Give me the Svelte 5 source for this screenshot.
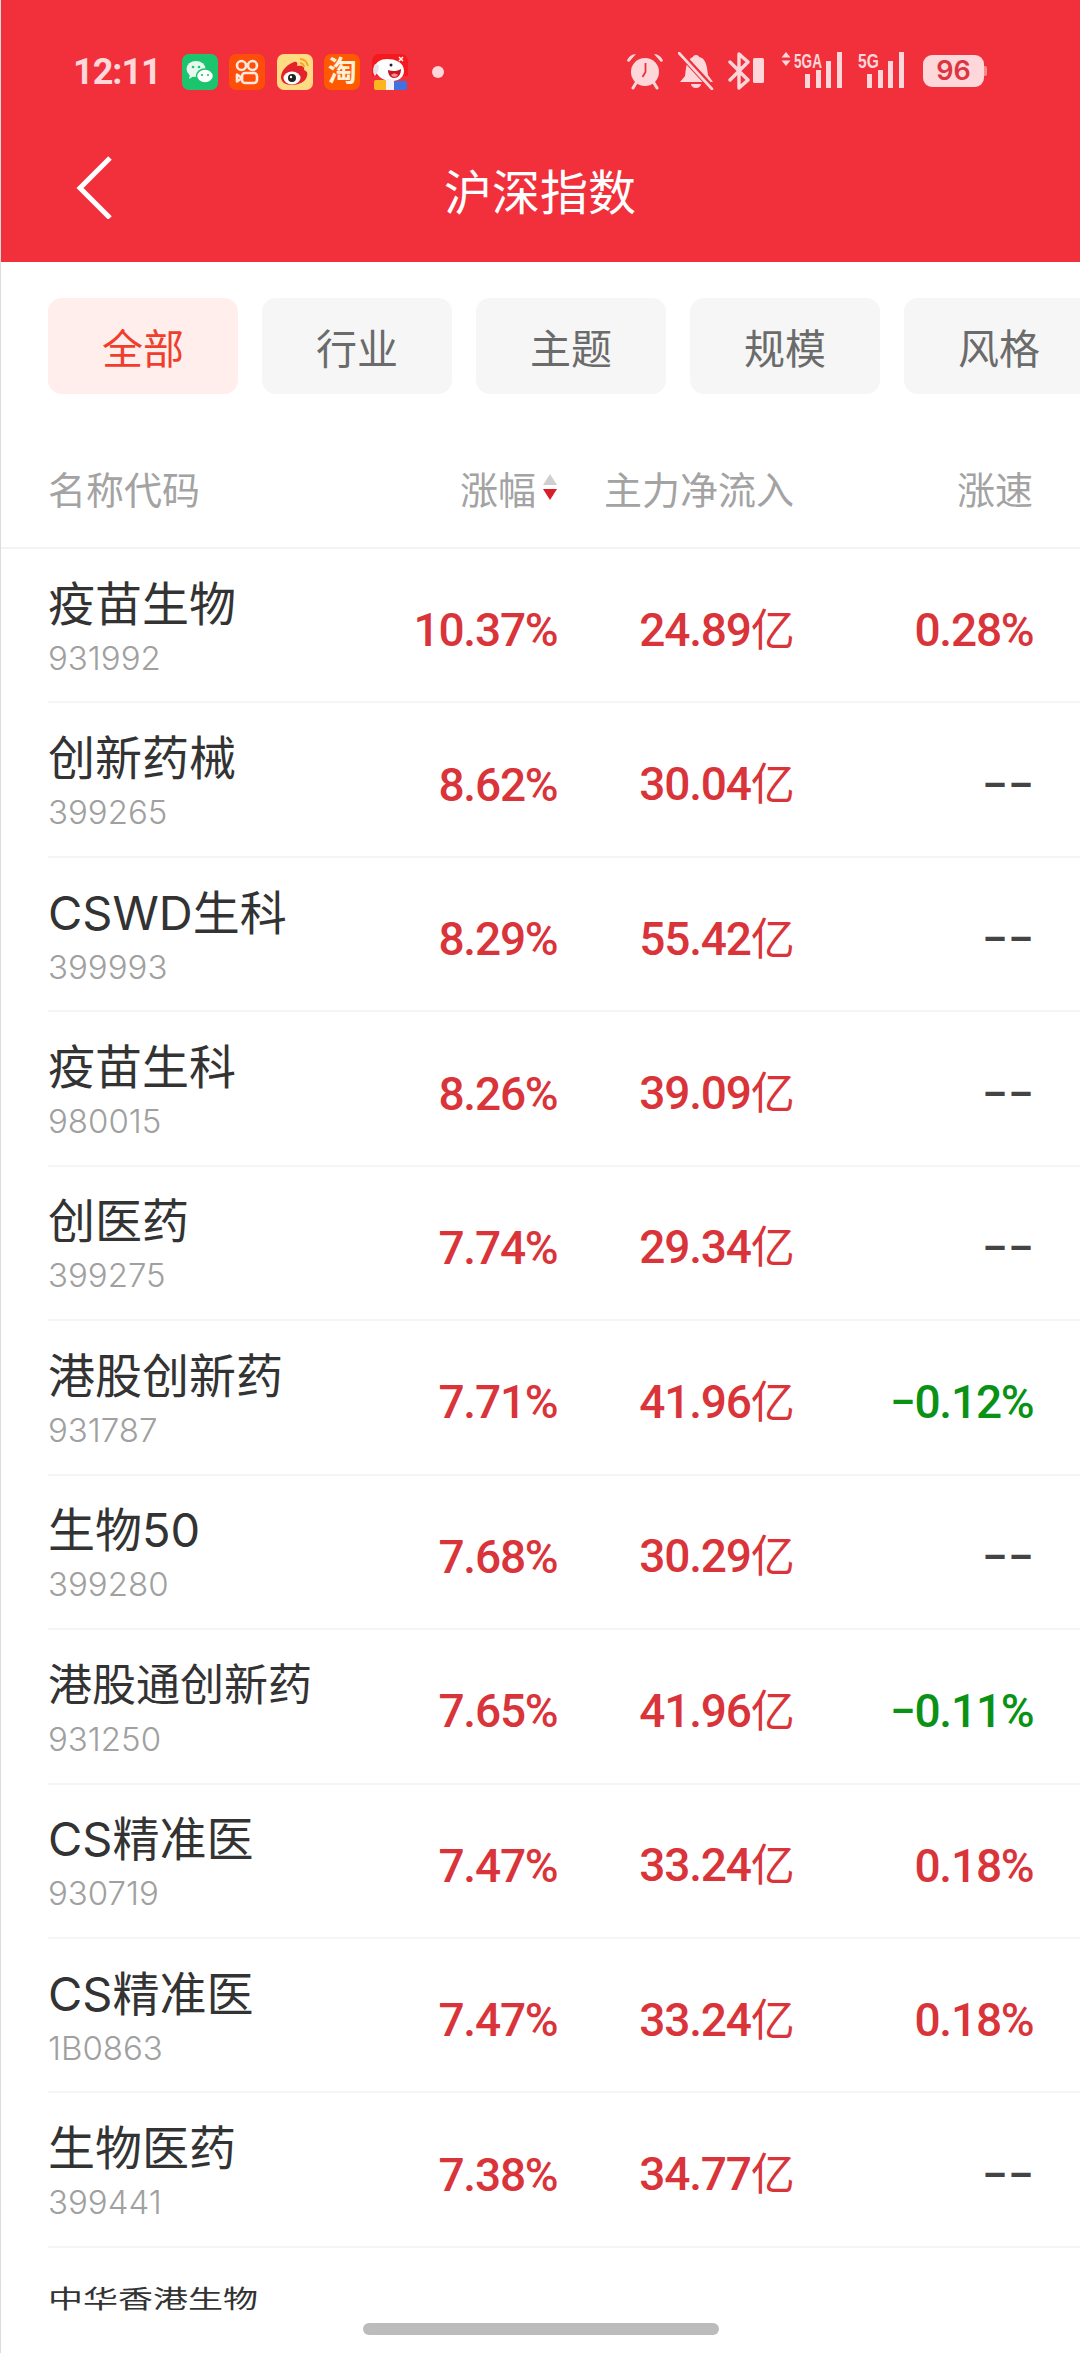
<script>
	const tabs = ['全部', '行业', '主题', '规模', '风格'];

	const rows = [
		{ name: '疫苗生物', code: '931992', change: '10.37%', flow: '24.89', speed: '0.28%', dir: 'up' },
		{ name: '创新药械', code: '399265', change: '8.62%', flow: '30.04', speed: '−−', dir: 'none' },
		{ name: 'CSWD生科', code: '399993', change: '8.29%', flow: '55.42', speed: '−−', dir: 'none' },
		{ name: '疫苗生科', code: '980015', change: '8.26%', flow: '39.09', speed: '−−', dir: 'none' },
		{ name: '创医药', code: '399275', change: '7.74%', flow: '29.34', speed: '−−', dir: 'none' },
		{ name: '港股创新药', code: '931787', change: '7.71%', flow: '41.96', speed: '−0.12%', dir: 'down' },
		{ name: '生物50', code: '399280', change: '7.68%', flow: '30.29', speed: '−−', dir: 'none' },
		{ name: '港股通创新药', code: '931250', change: '7.65%', flow: '41.96', speed: '−0.11%', dir: 'down', small: true },
		{ name: 'CS精准医', code: '930719', change: '7.47%', flow: '33.24', speed: '0.18%', dir: 'up' },
		{ name: 'CS精准医', code: '1B0863', change: '7.47%', flow: '33.24', speed: '0.18%', dir: 'up' },
		{ name: '生物医药', code: '399441', change: '7.38%', flow: '34.77', speed: '−−', dir: 'none' }
	];
</script>

<div class="page">
	<header class="top">
		<div class="status">
			<span class="time">12:11</span>
			<div class="apps">
				<svg class="app" viewBox="0 0 36 36" aria-hidden="true">
					<rect width="36" height="36" rx="7" fill="#1cc46d" />
					<ellipse cx="14" cy="15" rx="9.5" ry="8" fill="#e8f8ee" />
					<path d="M8 20l-1 5 5-3z" fill="#e8f8ee" />
					<ellipse cx="23" cy="22" rx="8.5" ry="7" fill="#fff" stroke="#1cc46d" stroke-width="1.5" />
					<circle cx="11" cy="13" r="1.3" fill="#1cc46d" />
					<circle cx="17" cy="13" r="1.3" fill="#1cc46d" />
					<circle cx="20" cy="21" r="1.1" fill="#1cc46d" />
					<circle cx="26" cy="21" r="1.1" fill="#1cc46d" />
				</svg>
				<svg class="app" viewBox="0 0 36 36" aria-hidden="true">
					<rect width="36" height="36" rx="7" fill="#ff4d0a" />
					<g fill="none" stroke="#ffe9dc" stroke-width="2.6">
						<circle cx="12.5" cy="11.5" r="4.5" />
						<circle cx="23.5" cy="11.5" r="4.5" />
						<rect x="13" y="19" width="15" height="10" rx="3" />
						<path d="M13 24l-5-3.5v7z" stroke-linejoin="round" />
					</g>
				</svg>
				<svg class="app" viewBox="0 0 36 36" aria-hidden="true">
					<rect width="36" height="36" rx="7" fill="#ffdc84" />
					<path d="M4 23c0-7 7-13 13-15 3-1 4 1 3 4 5-1 8 1 7 4 3 1 4 3 3 6-1 6-9 9-15 9-7 0-11-3-11-8z" fill="#e3222b" />
					<ellipse cx="15" cy="24" rx="8.5" ry="6.5" fill="#fff" />
					<circle cx="15" cy="24" r="4" fill="#222" />
					<circle cx="14" cy="23" r="1.2" fill="#fff" />
					<path d="M23 5c4 0 7 3 8 7M23 9c2 0 4 2 4 4" fill="none" stroke="#f5a623" stroke-width="2" />
				</svg>
				<span class="app tao">淘</span>
				<svg class="app" viewBox="0 0 36 36" aria-hidden="true">
					<path d="M7 0h22a7 7 0 0 1 7 7v15H0V7a7 7 0 0 1 7-7z" fill="#f4181f" />
					<path d="M3 14c0-6 6-9 12-9 8 0 17 3 17 12 0 6-5 10-12 10-5 0-8-1-11-3-3-3-6-5-6-10z" fill="#fff" />
					<path d="M3 10c-2 3-3 9 0 12 3-3 4-7 4-11z" fill="#e3e3e8" />
					<path d="M16 16c5 2 10 1 13-1 0 6-3 9-7 9s-6-4-6-8z" fill="#c8141c" />
					<path d="M19 21c2-2 5-2 7 0-1 2-5 3-7 0z" fill="#ff8a8f" />
					<circle cx="19" cy="11" r="1.5" fill="#222" />
					<path d="M27 3l4 4M31 3l-4 4" stroke="#fff" stroke-width="1.4" />
					<rect x="2" y="26" width="15" height="10" rx="2" fill="#fbb71f" />
					<rect x="14" y="25" width="8" height="11" fill="#f2f2f6" />
					<rect x="22" y="27" width="13" height="9" rx="2" fill="#3d72e0" />
				</svg>
				<span class="dot"></span>
			</div>

			<div class="sys">
				<svg class="alarm" viewBox="0 0 38 38" aria-hidden="true">
					<path d="M1 9c1-4 5-7 9-7l-7 8zM37 9c-1-4-5-7-9-7l7 8z" fill="#fdd7da" />
					<circle cx="19" cy="20" r="14" fill="#fdd7da" />
					<path d="M10 31l-3 5M28 31l3 5" stroke="#fdd7da" stroke-width="3" stroke-linecap="round" />
					<path d="M19.5 11v9l-3 5" fill="none" stroke="#ef303b" stroke-width="1.8" />
				</svg>
				<svg class="bell" viewBox="0 0 36 38" aria-hidden="true">
					<path d="M18 3c2 0 3 1 3 2 5 1 7 5 8 11l1 7 5 7H2l5-6 1-8c1-6 4-10 7-11 0-1 1-2 3-2z" fill="#fdd7da" />
					<path d="M13 32h10c0 2-2 4-5 4s-5-2-5-4z" fill="#fdd7da" />
					<path d="M0 -1l35 38" stroke="#ef303b" stroke-width="6" />
					<path d="M1 1l33 36" stroke="#fdd7da" stroke-width="2.6" stroke-linecap="round" />
				</svg>
				<svg class="bt" viewBox="0 0 36 38" aria-hidden="true">
					<path d="M2 10l18 18-9 8V2l9 8L2 28" fill="none" stroke="#fdd7da" stroke-width="3.4" stroke-linecap="round" stroke-linejoin="round" />
					<rect x="25" y="6" width="11" height="25" rx="1.5" fill="#fdd7da" />
				</svg>
				<div class="net wide">
					<svg class="updown" viewBox="0 0 10 14" aria-hidden="true">
						<path d="M5 0l4.5 5.5h-9zM5 14L.5 8.5h9z" fill="#fdd7da" />
					</svg>
					<span class="label">5GA</span>
					<div class="bars"><i class="b1"></i><i class="b2"></i><i class="b3"></i><i class="b4"></i></div>
				</div>
				<div class="net">
					<span class="label">5G</span>
					<div class="bars"><i class="b1"></i><i class="b2"></i><i class="b3"></i><i class="b4"></i></div>
				</div>
				<div class="battery"><span>96</span></div>
			</div>
		</div>

		<div class="nav">
			<svg class="back" viewBox="0 0 40 64" aria-hidden="true">
				<path d="M36 3L6 33l30 30" fill="none" stroke="#fff" stroke-width="5" />
			</svg>
			<h1>沪深指数</h1>
		</div>
	</header>

	<div class="tabs">
		{#each tabs as tab, i}
			<button class="tab" class:active={i === 0} type="button">{tab}</button>
		{/each}
	</div>

	<div class="thead">
		<span class="c-name">名称代码</span>
		<span class="c-change">
			涨幅
			<svg class="sort" viewBox="0 0 16 28" aria-hidden="true">
				<path d="M8 1l7 11H1z" fill="#cfcfcf" />
				<path d="M8 27l7-11H1z" fill="#d81e26" />
			</svg>
		</span>
		<span class="c-flow">主力净流入</span>
		<span class="c-speed">涨速</span>
	</div>

	<div class="list">
		{#each rows as row}
			<div class="row">
				<div class="c-name">
					<div class="name" class:small={row.small}>{row.name}</div>
					<div class="code">{row.code}</div>
				</div>
				<div class="c-change num up">{row.change}</div>
				<div class="c-flow num up">{row.flow}<span class="unit">亿</span></div>
				<div class="c-speed num {row.dir}">{row.speed}</div>
			</div>
		{/each}
		<div class="row last">
			<div class="name tiny">中华香港生物</div>
		</div>
	</div>

	<div class="home"><span></span></div>
</div>

<style>
	:global(body) {
		margin: 0;
		background: #fff;
	}
	.page {
		width: 1080px;
		height: 2353px;
		overflow: hidden;
		display: flex;
		flex-direction: column;
		background: #fff;
		border-left: 1px solid #dcdcdc;
		box-sizing: border-box;
		font-family: Roboto, "Noto Sans CJK SC", sans-serif;
	}
	.top {
		height: 262px;
		flex: none;
		background: #f1303b;
		margin-left: -1px;
		display: flex;
		flex-direction: column;
	}
	.status {
		height: 142px;
		padding: 54px 0 0 73px;
		box-sizing: border-box;
		display: flex;
		align-items: flex-start;
		color: #fdd7da;
	}
	.time {
		width: 109px;
		font-size: 36px;
		font-weight: 700;
		line-height: 36px;
		letter-spacing: -1px;
	}
	.apps {
		display: flex;
		align-items: center;
		gap: 11.4px;
	}
	.app {
		width: 36px;
		height: 36px;
		display: block;
	}
	.tao {
		border-radius: 7px;
		background: #ff5a00;
		color: #fff1d8;
		font-size: 29px;
		font-weight: 700;
		line-height: 36px;
		text-align: center;
	}
	.dot {
		width: 12px;
		height: 12px;
		margin-left: 13px;
		border-radius: 50%;
		background: #fdd7da;
	}
	.sys {
		margin: -2px 0 0 182px;
		display: flex;
		align-items: flex-start;
	}
	.alarm {
		width: 38px;
		height: 38px;
	}
	.bell {
		width: 36px;
		height: 38px;
		margin-left: 14px;
	}
	.bt {
		width: 36px;
		height: 38px;
		margin-left: 14px;
	}
	.net {
		position: relative;
		width: 46px;
		height: 36px;
		margin-left: 16px;
	}
	.net.wide {
		width: 61px;
		margin-left: 17px;
	}
	.label {
		position: absolute;
		left: 0;
		top: 0;
		font-family: "Liberation Sans", sans-serif;
		font-size: 20px;
		font-weight: 700;
		line-height: 18px;
		transform: scaleX(0.78);
		transform-origin: left;
	}
	.wide .label {
		left: 13px;
		transform: scaleX(0.68);
	}
	.updown {
		position: absolute;
		left: 0;
		top: 0;
		width: 10px;
		height: 14px;
	}
	.bars {
		position: absolute;
		right: 0;
		bottom: 0;
		display: flex;
		align-items: flex-end;
		gap: 5.5px;
	}
	.bars i {
		display: block;
		width: 5px;
		background: #fdd7da;
	}
	.bars .b1 { height: 14px; }
	.bars .b2 { height: 18px; }
	.bars .b3 { height: 27px; }
	.bars .b4 { height: 36px; }
	.battery {
		position: relative;
		width: 61px;
		height: 32px;
		margin: 3px 0 0 19px;
		border-radius: 9px;
		background: #fdd7da;
		color: #dc3540;
		font-family: Inter, sans-serif;
		font-size: 27px;
		font-weight: 600;
		line-height: 32px;
		text-align: center;
	}
	.battery::after {
		content: '';
		position: absolute;
		right: -3px;
		top: 11px;
		width: 3px;
		height: 10px;
		border-radius: 0 2px 2px 0;
		background: #f78b92;
	}
	.nav {
		position: relative;
		flex: 1;
		display: flex;
		align-items: center;
		justify-content: center;
		padding-bottom: 26px;
	}
	.back {
		position: absolute;
		left: 74px;
		top: 13px;
		width: 40px;
		height: 64px;
	}
	h1 {
		margin: 0;
		color: #fff;
		font-size: 48px;
		font-weight: 400;
		line-height: 60px;
		font-family: "Noto Sans CJK SC", sans-serif;
	}
	.tabs {
		flex: none;
		display: flex;
		gap: 24px;
		padding: 36px 0 0 47px;
		overflow: hidden;
	}
	.tab {
		flex: 0 0 190px;
		height: 96px;
		padding: 0;
		border: 0;
		border-radius: 14px;
		background: #f6f6f6;
		color: #6b6b6b;
		font-family: "Noto Sans CJK SC", sans-serif;
		font-size: 41px;
	}
	.tab.active {
		background: #ffeeec;
		color: #ef3e2e;
	}
	.thead {
		flex: none;
		height: 155px;
		display: flex;
		align-items: center;
		padding: 33px 47px 0;
		box-sizing: border-box;
		border-bottom: 2px solid #f3f3f3;
		color: #a3a3a3;
		font-family: "Noto Sans CJK SC", sans-serif;
		font-size: 38px;
	}
	.c-name {
		flex: 1;
		min-width: 0;
	}
	.c-change {
		width: 300px;
		text-align: right;
	}
	.thead .c-change {
		display: flex;
		align-items: center;
		justify-content: flex-end;
		gap: 6px;
	}
	.sort {
		width: 16px;
		height: 28px;
	}
	.c-flow {
		width: 236px;
		text-align: right;
	}
	.c-speed {
		width: 240px;
		text-align: right;
	}
	.thead .c-speed {
		width: 239px;
	}
	.row {
		height: 154.45px;
		box-sizing: border-box;
		margin-left: 47px;
		padding-right: 46.5px;
		display: flex;
		align-items: center;
		border-bottom: 2px solid #f5f5f5;
	}
	.row .c-name {
		padding-top: 3px;
	}
	.name {
		color: #333;
		font-family: Inter, "Noto Sans CJK SC", sans-serif;
		font-size: 47px;
		line-height: 60px;
		white-space: nowrap;
	}
	.name.small {
		font-size: 44px;
	}
	.code {
		margin-top: 2px;
		color: #a0a0a0;
		font-family: Inter, sans-serif;
		font-size: 33px;
		font-weight: 300;
		line-height: 44px;
	}
	.num {
		padding-top: 10px;
		font-size: 46px;
		font-weight: 500;
		line-height: 60px;
		letter-spacing: -1.2px;
		white-space: nowrap;
	}
	.unit {
		font-size: 44px;
		font-weight: 400;
	}
	.num.up {
		color: #d9343a;
	}
	.num.down {
		color: #0a9216;
	}
	.num.none {
		color: #444;
		letter-spacing: 0;
	}
	.list {
		flex: none;
		height: 1764px;
		overflow: hidden;
	}
	.row.last {
		border: 0;
		align-items: flex-start;
		padding-top: 39px;
	}
	.name.tiny {
		font-size: 35px;
		line-height: 24px;
		transform: scaleY(0.7);
	}
	.home {
		flex: 1;
		display: flex;
		justify-content: center;
		padding-top: 10px;
	}
	.home span {
		width: 356px;
		height: 12px;
		border-radius: 6px;
		background: #bcbcbc;
	}
</style>
